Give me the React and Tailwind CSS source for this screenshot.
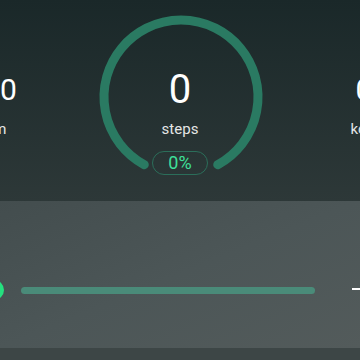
import React from "react";

function Stat({ value, label, big }) {
  return (
    <div
      className={
        big
          ? "w-[184px] flex-none flex flex-col items-center pt-[66px]"
          : "w-[184px] flex-none flex flex-col items-center pt-[72px]"
      }
    >
      <div
        className={
          big
            ? "text-[40px] leading-[48px] text-white"
            : "text-[30px] leading-[36px] text-white"
        }
      >
        {value}
      </div>
      <div
        className={
          big
            ? "mt-[5px] text-[15px] leading-[20px] text-[#e4e6e6]"
            : "mt-[11px] text-[15px] leading-[20px] text-[#e4e6e6]"
        }
      >
        {label}
      </div>
    </div>
  );
}

function StepsRing() {
  return (
    <div className="relative w-[184px] flex-none">
      <svg
        className="absolute left-0 top-0"
        width="184"
        height="200"
        viewBox="0 0 184 200"
      >
        <path
          d="M 56.3 164.7 A 77 77 0 1 1 129.7 164.7"
          fill="none"
          stroke="#2a7a62"
          strokeWidth="9"
          strokeLinecap="round"
        />
      </svg>
      <div className="relative flex flex-col items-center">
        <Stat value="0" label="steps" big />
        <div className="mt-[12px] w-[56px] h-[24px] rounded-full border border-[#2b6e5a] flex items-center justify-center text-[18px] leading-none text-[#3ee09a]">
          0%
        </div>
      </div>
    </div>
  );
}

export default function App() {
  return (
    <div
      className="w-[360px] h-[360px] overflow-hidden flex flex-col"
      style={{ fontFamily: "Roboto, 'Noto Sans', sans-serif" }}
    >
      <div className="h-[201px] flex-none flex justify-center bg-gradient-to-b from-[#1a2829] to-[#2d3838]">
        <Stat value="0.0" label="km" />
        <StepsRing />
        <Stat value="0" label="kcal" />
      </div>

      <div className="h-[147px] flex-none bg-gradient-to-br from-[#434d4e] via-[#4c5657] to-[#535b5b] pt-[79px]">
        <div className="flex items-center h-[20px]">
          <div className="ml-[-16px] w-5 h-5 flex-none rounded-full bg-[#25e07f]" />
          <div className="ml-[17px] w-[294px] h-[7px] flex-none rounded-full bg-[#4a8b79]" />
          <div className="ml-[37px] relative w-6 h-6 flex-none">
            <div className="absolute left-0 top-[10px] w-6 h-[2px] bg-white" />
            <div className="absolute left-[11px] top-0 w-[2px] h-6 bg-white" />
          </div>
        </div>
      </div>

      <div className="flex-1 bg-[#3d4646]" />
    </div>
  );
}
